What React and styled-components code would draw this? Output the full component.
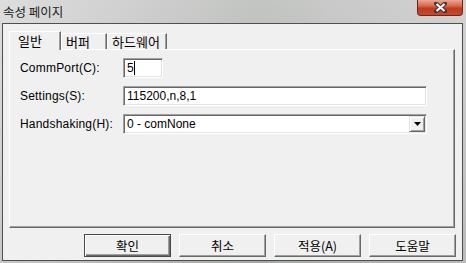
import React from 'react'
import styled, { createGlobalStyle } from 'styled-components'

const GlobalStyle = createGlobalStyle`
  html, body {
    margin: 0;
    padding: 0;
    background: #b8b8b8;
  }
  body {
    font-family: "Liberation Sans", "Noto Sans CJK KR", sans-serif;
    font-size: 12px;
    color: #000;
  }
`

const Window = styled.div`
  width: 466px;
  height: 263px;
  box-sizing: border-box;
  display: flex;
  flex-direction: column;
  padding: 0 3px 2px 2px;
  background: linear-gradient(180deg, rgba(255,255,255,0.25), rgba(0,0,0,0.05)),
    linear-gradient(90deg, #d2d2d2 0%, #bcbcbc 35%, #aeb2ac 55%, #b9b9b9 75%, #c4c4c4 100%);
`

const TitleBar = styled.div`
  height: 23px;
  flex-shrink: 0;
  display: flex;
  align-items: flex-start;
  justify-content: space-between;
`

const Title = styled.span`
  font-family: "Noto Sans CJK KR", sans-serif;
  font-size: 12.5px;
  line-height: 14px;
  color: #1c1c1c;
  padding: 5px 0 0 1px;
`

const CloseButton = styled.div`
  width: 46px;
  height: 16px;
  box-sizing: border-box;
  border: 1px solid #6e2418;
  border-top: none;
  border-radius: 0 0 4px 4px;
  background: linear-gradient(180deg, #e9a796 0%, #d8664c 40%, #c03a20 55%, #c9492c 100%);
  display: flex;
  align-items: center;
  justify-content: center;
`

const Client = styled.div`
  flex: 1;
  display: flex;
  flex-direction: column;
  border: 1px solid #4f4f4f;
  background: #f0f0f0;
  padding: 7px 6px 3px 6px;
`

const TabStrip = styled.div`
  height: 18px;
  display: flex;
  align-items: flex-end;
  flex-shrink: 0;
  position: relative;
  z-index: 1;
`

const Tab = styled.div`
  box-sizing: border-box;
  height: ${p => (p.$active ? '19px' : '16px')};
  margin-bottom: ${p => (p.$active ? '-1px' : '0')};
  padding: ${p => (p.$active ? '1px 8px 0 8px' : '0 6px 0 4px')};
  width: ${p => p.$w}px;
  background: #f0f0f0;
  border-top: 1px solid #fff;
  border-left: 1px solid #fff;
  border-right: 1px solid #696969;
  box-shadow: inset -1px 0 0 #a0a0a0;
  font-family: "Noto Sans CJK KR", sans-serif;
  font-size: 13px;
  line-height: 15px;
  white-space: nowrap;
`

const Panel = styled.div`
  flex: 1;
  margin-right: 1px;
  box-sizing: border-box;
  border-top: 1px solid #fff;
  border-left: 1px solid #fff;
  border-right: 1px solid #696969;
  border-bottom: 1px solid #696969;
  box-shadow: inset -1px -1px 0 #a0a0a0;
  padding: 8px 0 0 10px;
`

const Form = styled.div`
  display: grid;
  grid-template-columns: 103px auto;
  row-gap: 8px;
  align-items: center;
`

const Label = styled.span`
  line-height: 20px;
  letter-spacing: 0.2px;
  color: #000;
`

const Field = styled.div`
  box-sizing: border-box;
  height: 20px;
  width: ${p => p.$w}px;
  display: flex;
  align-items: center;
  background: #fff;
  border-top: 1px solid #a0a0a0;
  border-left: 1px solid #a0a0a0;
  border-right: 1px solid #fff;
  border-bottom: 1px solid #fff;
  box-shadow: inset 1px 1px 0 #696969, inset -1px -1px 0 #e3e3e3;
  padding-left: 3px;
  font-size: 12px;
  line-height: 14px;
`

const Caret = styled.span`
  width: 1px;
  height: 14px;
  background: #000;
`

const DropButton = styled.div`
  margin-left: auto;
  margin-right: 1px;
  box-sizing: border-box;
  width: 16px;
  height: 16px;
  background: #f0f0f0;
  border-top: 1px solid #e3e3e3;
  border-left: 1px solid #e3e3e3;
  border-right: 1px solid #696969;
  border-bottom: 1px solid #696969;
  box-shadow: inset 1px 1px 0 #fff, inset -1px -1px 0 #a0a0a0;
  display: flex;
  align-items: center;
  justify-content: center;
`

const ButtonRow = styled.div`
  flex-shrink: 0;
  display: flex;
  justify-content: flex-end;
  gap: 8px;
  margin-top: 6px;
`

const Button = styled.div`
  box-sizing: border-box;
  width: 87px;
  height: 23px;
  display: flex;
  align-items: center;
  justify-content: center;
  background: #f0f0f0;
  font-family: "Noto Sans CJK KR", sans-serif;
  font-size: 12.5px;
  ${p =>
    p.$default
      ? `
    border: 1px solid #4a4a4a;
    box-shadow: inset 1px 1px 0 #fff, inset -1px -1px 0 #696969, inset -2px -2px 0 #a0a0a0;
  `
      : `
    border-top: 1px solid #fff;
    border-left: 1px solid #fff;
    border-right: 1px solid #696969;
    border-bottom: 1px solid #696969;
    box-shadow: inset -1px -1px 0 #a0a0a0;
  `}
`

const tabs = [
  { label: '일반', w: 52, active: true },
  { label: '버퍼', w: 46 },
  { label: '하드웨어', w: 60 },
]

const buttons = [
  { label: '확인', def: true },
  { label: '취소' },
  { label: '적용(A)' },
  { label: '도움말' },
]

export default function App() {
  return (
    <>
      <GlobalStyle />
      <Window>
        <TitleBar>
          <Title>속성 페이지</Title>
          <CloseButton>
            <svg width="13" height="11" viewBox="0 0 13 11">
              <path d="M2 1.5 L11 9.5 M11 1.5 L2 9.5" stroke="#3a3a3a" strokeWidth="4" strokeLinecap="square" />
              <path d="M2.5 2 L10.5 9 M10.5 2 L2.5 9" stroke="#fff" strokeWidth="2" />
            </svg>
          </CloseButton>
        </TitleBar>
        <Client>
          <TabStrip>
            {tabs.map(t => (
              <Tab key={t.label} $active={t.active} $w={t.w}>
                {t.label}
              </Tab>
            ))}
          </TabStrip>
          <Panel>
            <Form>
              <Label>CommPort(C):</Label>
              <Field $w={40}>
                5<Caret />
              </Field>
              <Label>Settings(S):</Label>
              <Field $w={304}>115200,n,8,1</Field>
              <Label>Handshaking(H):</Label>
              <Field $w={304}>
                0 - comNone
                <DropButton>
                  <svg width="7" height="4" viewBox="0 0 7 4">
                    <path d="M0 0 H7 L3.5 4 Z" fill="#000" />
                  </svg>
                </DropButton>
              </Field>
            </Form>
          </Panel>
          <ButtonRow>
            {buttons.map(b => (
              <Button key={b.label} $default={b.def}>
                {b.label}
              </Button>
            ))}
          </ButtonRow>
        </Client>
      </Window>
    </>
  )
}
